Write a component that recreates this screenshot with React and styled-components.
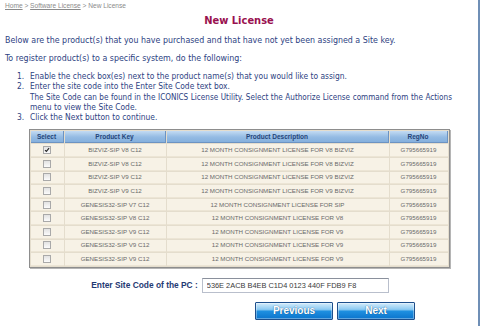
import React from "react";
import styled, { createGlobalStyle } from "styled-components";

const GlobalStyle = createGlobalStyle`
  html, body {
    margin: 0;
    padding: 0;
    background: #ffffff;
  }
  body {
    font-family: "DejaVu Sans Condensed", "DejaVu Sans", sans-serif;
  }
`;

const rows = [
  { key: "BIZVIZ-SIP V8 C12", desc: "12 MONTH CONSIGNMENT LICENSE FOR V8 BIZVIZ", checked: true },
  { key: "BIZVIZ-SIP V8 C12", desc: "12 MONTH CONSIGNMENT LICENSE FOR V8 BIZVIZ" },
  { key: "BIZVIZ-SIP V9 C12", desc: "12 MONTH CONSIGNMENT LICENSE FOR V9 BIZVIZ" },
  { key: "BIZVIZ-SIP V9 C12", desc: "12 MONTH CONSIGNMENT LICENSE FOR V9 BIZVIZ" },
  { key: "GENESIS32-SIP V7 C12", desc: "12 MONTH CONSIGNMENT LICENSE FOR SIP" },
  { key: "GENESIS32-SIP V8 C12", desc: "12 MONTH CONSIGNMENT LICENSE FOR V8" },
  { key: "GENESIS32-SIP V9 C12", desc: "12 MONTH CONSIGNMENT LICENSE FOR V9" },
  { key: "GENESIS32-SIP V9 C12", desc: "12 MONTH CONSIGNMENT LICENSE FOR V9" },
  { key: "GENESIS32-SIP V9 C12", desc: "12 MONTH CONSIGNMENT LICENSE FOR V9" },
];

function App() {
  return (
    <>
      <GlobalStyle />
      <Page>
        <Crumbs>
          <CrumbLink>Home</CrumbLink> &gt; <CrumbLink>Software License</CrumbLink> &gt; New License
        </Crumbs>
        <Title>New License</Title>
        <Para $top={6}>
          Below are the product(s) that you have purchased and that have not yet been assigned a Site key.
        </Para>
        <Para $top={8}>To register product(s) to a specific system, do the following:</Para>

        <Steps>
          <Step>
            <Num>1.</Num>
            <span>Enable the check box(es) next to the product name(s) that you would like to assign.</span>
          </Step>
          <Step>
            <Num>2.</Num>
            <span>
              Enter the site code into the Enter Site Code text box.
              <br />
              <Justified>
                The Site Code can be found in the ICONICS License Utility. Select the Authorize License command from the Actions
              </Justified>
              menu to view the Site Code.
            </span>
          </Step>
          <Step>
            <Num>3.</Num>
            <span>Click the Next button to continue.</span>
          </Step>
        </Steps>

        <Grid>
          <colgroup>
            <col style={{ width: 33 }} />
            <col style={{ width: 101 }} />
            <col style={{ width: 222 }} />
            <col style={{ width: 58 }} />
          </colgroup>
          <thead>
            <tr>
              <Head>Select</Head>
              <Head>Product Key</Head>
              <Head>Product Description</Head>
              <Head>RegNo</Head>
            </tr>
          </thead>
          <tbody>
            {rows.map((r, i) => (
              <tr key={i}>
                <Cell>
                  <Check>
                    {r.checked && (
                      <svg width="6" height="6" viewBox="0 0 7 7">
                        <path d="M1.2 3.6 L2.8 5.2 L5.9 1.4" fill="none" stroke="#2b2b2b" strokeWidth="1.4" />
                      </svg>
                    )}
                  </Check>
                </Cell>
                <Cell>{r.key}</Cell>
                <Cell>{r.desc}</Cell>
                <Cell>G795665919</Cell>
              </tr>
            ))}
          </tbody>
        </Grid>

        <CodeRow>
          <CodeLabel>Enter Site Code of the PC :</CodeLabel>
          <CodeInput defaultValue="536E 2ACB B4EB C1D4 0123 440F FDB9 F8" />
        </CodeRow>

        <Buttons>
          <NavButton>Previous</NavButton>
          <NavButton>Next</NavButton>
        </Buttons>
      </Page>
    </>
  );
}

export default App;

const Page = styled.div`
  width: 480px;
  height: 326px;
  box-sizing: border-box;
  border-right: 2px solid #6f8fb6;
  color: #2d4282;
  overflow: hidden;
`;

const Crumbs = styled.div`
  padding: 1px 0 0 5px;
  font-family: "Liberation Sans", Arial, sans-serif;
  font-size: 6.6px;
  line-height: 10px;
  color: #8a8a8a;
`;

const CrumbLink = styled.span`
  text-decoration: underline;
`;

const Title = styled.h1`
  margin: 2px 0 0;
  text-align: center;
  font-size: 11px;
  line-height: 16px;
  font-weight: bold;
  color: #99114f;
`;

const Para = styled.p`
  margin: ${(p) => p.$top}px 0 0;
  padding-left: 5px;
  font-size: 8.8px;
  line-height: 10px;
  white-space: nowrap;
`;

const Steps = styled.ol`
  list-style: none;
  margin: 8px 0 0;
  padding: 0 0 0 17px;
  font-size: 8.4px;
  line-height: 10.3px;
`;

const Step = styled.li`
  display: flex;
  white-space: nowrap;
`;

const Num = styled.span`
  width: 13px;
  flex: none;
`;

const Justified = styled.span`
  display: block;
  width: 422px;
  text-align: justify;
  text-align-last: justify;
  font-size: 8.1px;
`;

const Grid = styled.table`
  margin: 7px auto 0;
  width: 418px;
  table-layout: fixed;
  border-collapse: separate;
  border-spacing: 1px;
  background: #e4ddcd;
  border: 1px solid #8d8d8d;
  box-shadow: 1px 1px 0 #b5b5b5;
  font-family: "Liberation Sans", Arial, sans-serif;
`;

const Head = styled.th`
  height: 11px;
  padding: 0;
  font-size: 6.5px;
  line-height: 8px;
  font-weight: bold;
  color: #23457a;
  background: linear-gradient(#c3dbf3, #94bbe3 55%, #85b0dd);
  border: 1px solid #6c93c2;
  border-width: 0 1px 1px 0;
`;

const Cell = styled.td`
  height: 11.6px;
  padding: 0;
  text-align: center;
  vertical-align: middle;
  font-size: 6.2px;
  line-height: 8px;
  color: #6a6a6a;
  background: #f7f2e6;
  border-bottom: 1px solid #ece5d5;
  white-space: nowrap;
  overflow: hidden;
`;

const Check = styled.span`
  display: flex;
  align-items: center;
  justify-content: center;
  box-sizing: border-box;
  width: 8px;
  height: 8px;
  margin: 0 auto;
  border: 1px solid #a9a9a9;
  background: linear-gradient(#e2e2e2, #fbfbfb);
`;

const CodeRow = styled.div`
  display: flex;
  justify-content: center;
  align-items: center;
  gap: 4px;
  margin-top: 10px;
  padding-left: 2px;
`;

const CodeLabel = styled.span`
  font-family: "Liberation Sans", Arial, sans-serif;
  font-size: 8.4px;
  font-weight: bold;
  color: #1f3a73;
`;

const CodeInput = styled.input`
  box-sizing: border-box;
  width: 187px;
  height: 15px;
  padding: 0 0 0 4px;
  border: 1px solid #b9bfcc;
  border-top-color: #8a909c;
  font-family: "Liberation Sans", Arial, sans-serif;
  font-size: 7.4px;
  color: #3a3a3a;
  outline: none;
`;

const Buttons = styled.div`
  display: flex;
  gap: 4px;
  margin: 9px 0 0 255px;
`;

const NavButton = styled.button`
  box-sizing: border-box;
  width: 78px;
  height: 18px;
  padding: 0;
  border: 1px solid #1d4f8c;
  border-radius: 1px;
  background: linear-gradient(#d4ecfb 0%, #8ccaf2 40%, #1e8fe0 52%, #0b74cc 100%);
  box-shadow: inset 0 0 0 1px rgba(255, 255, 255, 0.35);
  font-family: "Liberation Sans", Arial, sans-serif;
  font-size: 10px;
  font-weight: bold;
  color: #ffffff;
  text-shadow: 0 0 1px #0a3f78;
`;
